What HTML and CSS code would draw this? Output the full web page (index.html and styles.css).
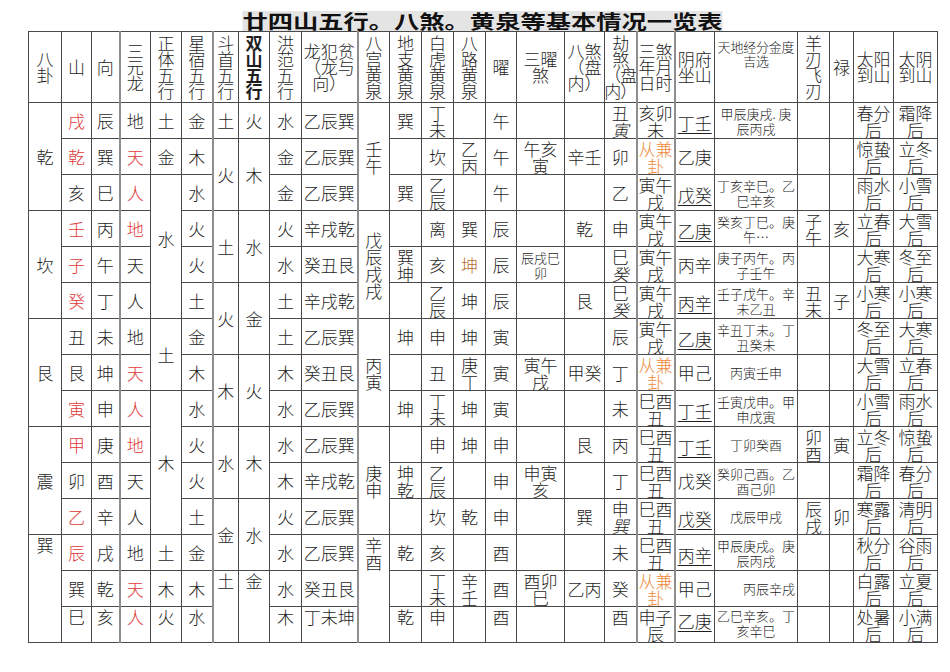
FILE: index.html
```html
<!DOCTYPE html>
<html lang="zh-CN">
<head>
<meta charset="utf-8">
<title>廿四山五行一览表</title>
<link rel="stylesheet" href="styles.css">
</head>
<body>
<div class="page">
  <div class="title"><span>廿四山五行。八煞。黄泉等基本情况一览表</span></div>
  <table class="grid">
    <colgroup>
      <col class="w33"><col class="w30"><col class="w28"><col class="w31 gl"><col class="w31"><col class="w31"><col class="w26 gl"><col class="w31">
      <col class="w32"><col class="w56"><col class="w32 gl"><col class="w32"><col class="w32"><col class="w32"><col class="w31"><col class="w48">
      <col class="w40"><col class="w32"><col class="w38 gl"><col class="w40 gl"><col class="w83"><col class="w32"><col class="w24"><col class="w40"><col class="w44">
    </colgroup>
    <thead>
      <tr>
        <th><div class="hd"><p>八<br>卦</p></div></th>
        <th><div class="hd"><p>山</p></div></th>
        <th><div class="hd"><p>向</p></div></th>
        <th><div class="hd"><p>三<br>元<br>龙</p></div></th>
        <th><div class="hd"><p>正<br>体<br>五<br>行</p></div></th>
        <th><div class="hd"><p>星<br>宿<br>五<br>行</p></div></th>
        <th><div class="hd"><p>斗<br>首<br>五<br>行</p></div></th>
        <th><div class="hd"><p class="bold">双<br>山<br>五<br>行</p></div></th>
        <th><div class="hd"><p>洪<br>范<br>五<br>行</p></div></th>
        <th><div class="hd"><p>龙犯贫<br>（龙与<br>向）</p></div></th>
        <th><div class="hd"><p>八<br>宫<br>黄<br>泉</p></div></th>
        <th><div class="hd"><p>地<br>支<br>黄<br>泉</p></div></th>
        <th><div class="hd"><p>白<br>虎<br>黄<br>泉</p></div></th>
        <th><div class="hd"><p>八<br>路<br>黄<br>泉</p></div></th>
        <th><div class="hd"><p>曜</p></div></th>
        <th><div class="hd"><p>三曜<br>煞</p></div></th>
        <th><div class="hd"><p>八煞<br>（盘<br>内）</p></div></th>
        <th><div class="hd"><p class="tight">劫<br>煞<br>（盘<br>内）</p></div></th>
        <th><div class="hd"><p>三煞<br>年月<br>日时</p></div></th>
        <th><div class="hd"><p>阴府<br>坐山</p></div></th>
        <th><div class="hd top"><p class="dzh">天地经分金度<br>吉选</p></div></th>
        <th><div class="hd"><p>羊<br>刃<br>飞<br>刃</p></div></th>
        <th><div class="hd"><p>禄</p></div></th>
        <th><div class="hd"><p>太阳<br>到山</p></div></th>
        <th><div class="hd"><p>太阴<br>到山</p></div></th>
      </tr>
    </thead>
    <tbody>
      <tr>
        <td rowspan="3">乾</td><td class="r">戌</td><td>辰</td><td>地</td><td>土</td><td>金</td><td>土</td><td>火</td>
        <td>水</td><td>乙辰巽</td><td rowspan="3">壬午</td><td>巽</td><td>丁未</td><td></td><td>午</td><td></td>
        <td></td><td>丑<em>寅</em></td><td>亥卯未</td><td class="u"><span>丁壬</span></td><td class="dz">甲辰庚戌. 庚<br>辰丙戌</td><td></td><td></td><td>春分后</td><td>霜降后</td>
      </tr>
      <tr>
        <td class="r">乾</td><td>巽</td><td class="r">天</td><td>金</td><td>木</td><td rowspan="2">火</td><td rowspan="2">木</td>
        <td>金</td><td>乙辰巽</td><td></td><td>坎</td><td>乙丙</td><td>午</td><td>午亥寅</td>
        <td>辛壬</td><td>卯</td><td class="o">从兼卦</td><td>乙庚</td><td class="dz"></td><td></td><td></td><td>惊蛰后</td><td>立冬后</td>
      </tr>
      <tr>
        <td>亥</td><td>巳</td><td class="r">人</td><td rowspan="4" class="lift">水</td><td>水</td>
        <td>金</td><td>乙辰巽</td><td>巽</td><td>乙辰</td><td></td><td>午</td><td></td>
        <td></td><td>乙</td><td>寅午戌</td><td class="u"><span>戊癸</span></td><td class="dz">丁亥辛巳。乙<br>巳辛亥</td><td></td><td></td><td>雨水后</td><td>小雪后</td>
      </tr>
      <tr>
        <td rowspan="3">坎</td><td class="r">壬</td><td>丙</td><td class="r">地</td><td>火</td><td rowspan="2">土</td><td rowspan="2">水</td>
        <td>火</td><td>辛戌乾</td><td rowspan="3">戊辰戌戌</td><td></td><td>离</td><td>巽</td><td>辰</td><td></td>
        <td>乾</td><td>申</td><td>寅午戌</td><td class="u"><span>乙庚</span></td><td class="dz">癸亥丁巳。庚<br>午…</td><td>子午</td><td>亥</td><td>立春后</td><td>大雪后</td>
      </tr>
      <tr>
        <td class="r">子</td><td>午</td><td>天</td><td>火</td>
        <td>水</td><td>癸丑艮</td><td>巽坤</td><td>亥</td><td class="b">坤</td><td>辰</td><td class="sm">辰戌巳卯</td>
        <td></td><td>巳<em>癸</em></td><td>寅午戌</td><td>丙辛</td><td class="dz">庚子丙午。丙<br>子壬午</td><td></td><td></td><td>大寒后</td><td>冬至后</td>
      </tr>
      <tr>
        <td class="r">癸</td><td>丁</td><td>人</td><td>土</td><td rowspan="2">火</td><td rowspan="2">金</td>
        <td>土</td><td>辛戌乾</td><td></td><td>乙辰</td><td>坤</td><td>辰</td><td></td>
        <td>艮</td><td>巳<em>癸</em></td><td>寅午戌</td><td class="u"><span>丙辛</span></td><td class="dz">壬子戊午。辛<br>未乙丑</td><td>丑未</td><td>子</td><td>小寒后</td><td>小寒后</td>
      </tr>
      <tr>
        <td rowspan="3">艮</td><td>丑</td><td>未</td><td>地</td><td rowspan="2">土</td><td>金</td>
        <td>土</td><td>乙辰巽</td><td rowspan="3">丙寅</td><td>坤</td><td>申</td><td>坤</td><td>寅</td><td></td>
        <td></td><td>辰</td><td>寅午戌</td><td class="u"><span>乙庚</span></td><td class="dz">辛丑丁未。丁<br>丑癸未</td><td></td><td></td><td>冬至后</td><td>大寒后</td>
      </tr>
      <tr>
        <td>艮</td><td>坤</td><td class="r">天</td><td>木</td><td rowspan="2">木</td><td rowspan="2">火</td>
        <td>木</td><td>癸丑艮</td><td></td><td>丑</td><td>庚丁</td><td>寅</td><td>寅午戌</td>
        <td>甲癸</td><td>丁</td><td class="o">从兼卦</td><td>甲己</td><td class="dz">丙寅壬申</td><td></td><td></td><td>大雪后</td><td>立春后</td>
      </tr>
      <tr>
        <td class="r">寅</td><td>申</td><td class="r">人</td><td rowspan="4">木</td><td>水</td>
        <td>水</td><td>乙辰巽</td><td>坤</td><td>丁未</td><td>坤</td><td>寅</td><td></td>
        <td></td><td>未</td><td>巳酉丑</td><td class="u"><span>丁壬</span></td><td class="dz">壬寅戊申。甲<br>申戊寅</td><td></td><td></td><td>小雪后</td><td>雨水后</td>
      </tr>
      <tr>
        <td rowspan="3">震</td><td class="r">甲</td><td>庚</td><td class="r">地</td><td>火</td><td rowspan="2">水</td><td rowspan="2">木</td>
        <td>水</td><td>乙辰巽</td><td rowspan="3">庚申</td><td></td><td>申</td><td>坤</td><td>申</td><td></td>
        <td>艮</td><td>丙</td><td>巳酉丑</td><td class="u"><span>丁壬</span></td><td class="dz">丁卯癸酉</td><td>卯酉</td><td>寅</td><td>立冬后</td><td>惊蛰后</td>
      </tr>
      <tr>
        <td>卯</td><td>酉</td><td>天</td><td>火</td>
        <td>木</td><td>辛戌乾</td><td>坤乾</td><td>乙辰</td><td></td><td>申</td><td>申寅亥</td>
        <td></td><td>丁</td><td>巳酉丑</td><td>戊癸</td><td class="dz">癸卯己酉。乙<br>酉己卯</td><td></td><td></td><td>霜降后</td><td>春分后</td>
      </tr>
      <tr>
        <td class="r">乙</td><td>辛</td><td>人</td><td>土</td><td rowspan="2">金</td><td rowspan="2">水</td>
        <td>火</td><td>乙辰巽</td><td></td><td>坎</td><td>乾</td><td>申</td><td></td>
        <td>巽</td><td>申<em>巽</em></td><td>巳酉丑</td><td class="u"><span>戊癸</span></td><td class="dz">戊辰甲戌</td><td>辰戌</td><td>卯</td><td>寒露后</td><td>清明后</td>
      </tr>
      <tr>
        <td rowspan="3" class="top">巽</td><td class="r">辰</td><td>戌</td><td>地</td><td>土</td><td>金</td>
        <td>水</td><td>乙辰巽</td><td rowspan="3" class="top">辛酉</td><td>乾</td><td>亥</td><td></td><td>酉</td><td></td>
        <td></td><td>未</td><td>巳酉丑</td><td class="u"><span>丙辛</span></td><td class="dz">甲辰庚戌。庚<br>辰丙戌</td><td></td><td></td><td>秋分后</td><td>谷雨后</td>
      </tr>
      <tr>
        <td>巽</td><td>乾</td><td class="r">天</td><td>木</td><td>木</td><td rowspan="2" class="top">土</td><td rowspan="2" class="top">金</td>
        <td>水</td><td>癸丑艮</td><td></td><td>丁未</td><td>辛壬</td><td>酉</td><td>酉卯巳</td>
        <td>乙丙</td><td>癸</td><td class="o">从兼卦</td><td>甲己</td><td class="dz right">丙辰辛戌</td><td></td><td></td><td>白露后</td><td>立夏后</td>
      </tr>
      <tr class="last">
        <td>巳</td><td>亥</td><td class="r">人</td><td>火</td><td>水</td>
        <td>木</td><td>丁未坤</td><td>乾</td><td>申</td><td></td><td>酉</td><td></td>
        <td></td><td>酉</td><td>申子辰</td><td class="u"><span>乙庚</span></td><td class="dz">乙巳辛亥。丁<br>亥辛巳</td><td></td><td></td><td>处暑后</td><td>小满后</td>
      </tr>
    </tbody>
  </table>
</div>
</body>
</html>
```
FILE: styles.css
```css
html, body {
  margin: 0;
  padding: 0;
  background: #ffffff;
}

body {
  font-family: "Noto Sans CJK SC", "Noto Sans", sans-serif;
  color: #1e1e1e;
}

.page {
  padding: 10px 0 0 28px;
  width: 910px;
}

.title {
  width: 909px;
  text-align: center;
  height: 21px;
}

.title span {
  display: inline-block;
  font-size: 19px;
  line-height: 20px;
  font-weight: 700;
  background: #e4e4e4;
  color: #111;
  transform: scaleX(1.33);
  transform-origin: center;
}

.grid {
  border-collapse: collapse;
  table-layout: fixed;
  width: 909px;
}

.w24 { width: 24px; }
.w26 { width: 26px; }
.w28 { width: 28px; }
.w30 { width: 30px; }
.w31 { width: 31px; }
.w32 { width: 32px; }
.w33 { width: 33px; }
.w38 { width: 38px; }
.w40 { width: 40px; }
.w44 { width: 44px; }
.w48 { width: 48px; }
.w56 { width: 56px; }
.w83 { width: 83px; }

col.gl {
  border-left: 2px solid #8e8e8e;
}

.grid th,
.grid td {
  border: 1px solid #4a4a4a;
  padding: 0;
  text-align: center;
  vertical-align: middle;
  font-size: 17px;
  line-height: 17px;
  font-weight: 300;
  overflow: hidden;
}

.grid thead tr {
  height: 70px;
}

.hd {
  height: 70px;
  overflow: hidden;
  display: flex;
  align-items: center;
  justify-content: center;
}

.hd.top {
  align-items: flex-start;
}

.hd p {
  margin: 0;
  line-height: 16px;
  white-space: nowrap;
}

.hd p.bold {
  font-weight: 700;
}

.hd p.tight {
  line-height: 16px;
  letter-spacing: -1px;
}

.hd p.dzh {
  font-size: 13px;
  line-height: 14px;
  padding-top: 8px;
  letter-spacing: -0.2px;
}

.grid tbody tr {
  height: 36px;
}

.grid tbody tr.last td {
  vertical-align: top;
  padding-top: 1px;
}

.grid td.top {
  vertical-align: top;
  padding-top: 1px;
}

.grid td.lift {
  padding-bottom: 16px;
}

.r { color: #e0393a; }
.o { color: #ef8a3a; }
.b { color: #b8692e; }

.grid td.sm {
  font-size: 13px;
  line-height: 15px;
}

.grid td.dz {
  font-size: 13px;
  line-height: 15px;
}

.grid td.right {
  text-align: right;
  padding-right: 2px;
}

.grid td.u span {
  text-decoration: underline;
  text-underline-offset: 3px;
  text-decoration-thickness: 1px;
  display: inline-block;
  padding-top: 4px;
}

em {
  font-style: italic;
}
```
